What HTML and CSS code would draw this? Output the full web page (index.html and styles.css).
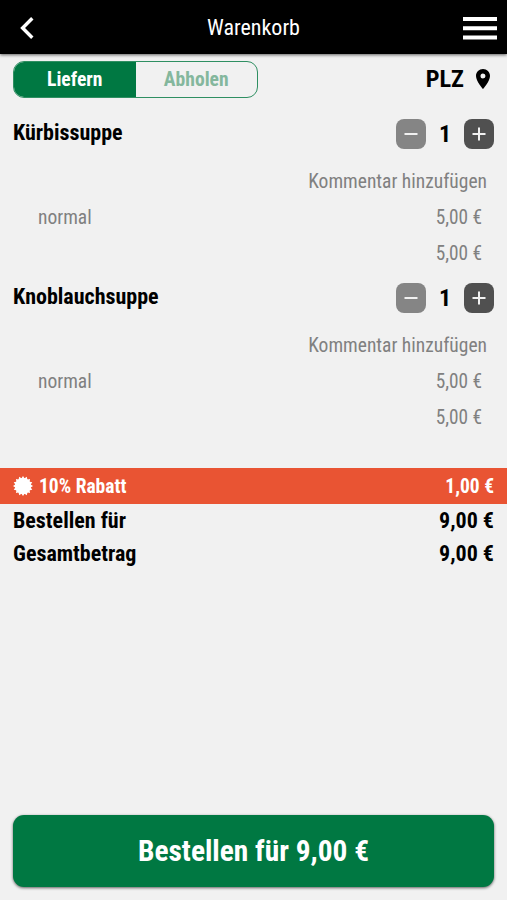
FILE: index.html
```html
<!DOCTYPE html>
<html lang="de">
<head>
<meta charset="utf-8">
<meta name="viewport" content="width=device-width, initial-scale=1">
<title>Warenkorb</title>
<link rel="stylesheet" href="styles.css">
</head>
<body>
<header class="topbar">
  <svg class="back" viewBox="0 0 14 22"><path d="M12.300 1.300L2.600 11l9.700 9.700" fill="none" stroke="#fff" stroke-width="3.400"/></svg>
  <h1 class="title"><span class="t">Warenkorb</span></h1>
  <svg class="menu" viewBox="0 0 34 24"><path d="M0 3h34M0 12.200h34M0 21.400h34" stroke="#fff" stroke-width="4"/></svg>
</header>
<main class="cart">
  <div class="mode-row">
    <div class="switch">
      <div class="option active"><span class="t">Liefern</span></div>
      <div class="option"><span class="t">Abholen</span></div>
    </div>
    <div class="plz"><span class="t">PLZ</span>
      <svg class="pin" viewBox="5 2 14 20"><path d="M12 2C8.130 2 5 5.130 5 9c0 5.250 7 13 7 13s7-7.750 7-13c0-3.870-3.130-7-7-7zm0 9.500a2.500 2.500 0 1 1 0-5 2.500 2.500 0 0 1 0 5z"/></svg>
    </div>
  </div>
  <section class="item">
    <div class="item-head">
      <h2 class="name"><span class="t">Kürbissuppe</span></h2>
      <div class="stepper">
        <button class="step minus" aria-label="Weniger"><svg viewBox="0 0 30 30"><path d="M8.500 15h13"/></svg></button>
        <span class="qty">1</span>
        <button class="step" aria-label="Mehr"><svg viewBox="0 0 30 30"><path d="M8.500 15h13M15 8.500v13"/></svg></button>
      </div>
    </div>
    <div class="comment"><span class="t">Kommentar hinzufügen</span></div>
    <div class="line"><span class="t">normal</span><span class="t price">5,00 €</span></div>
    <div class="line sum"><span class="t price">5,00 €</span></div>
  </section>
  <section class="item">
    <div class="item-head">
      <h2 class="name"><span class="t">Knoblauchsuppe</span></h2>
      <div class="stepper">
        <button class="step minus" aria-label="Weniger"><svg viewBox="0 0 30 30"><path d="M8.500 15h13"/></svg></button>
        <span class="qty">1</span>
        <button class="step" aria-label="Mehr"><svg viewBox="0 0 30 30"><path d="M8.500 15h13M15 8.500v13"/></svg></button>
      </div>
    </div>
    <div class="comment"><span class="t">Kommentar hinzufügen</span></div>
    <div class="line"><span class="t">normal</span><span class="t price">5,00 €</span></div>
    <div class="line sum"><span class="t price">5,00 €</span></div>
  </section>
  <div class="discount">
    <span class="label"><svg class="badge" viewBox="-10 -10 20 20"><circle r="8"/><path d="M-2 -7L0 -10L2 -7V7L0 10L-2 7z"/><path transform="rotate(22.500)" d="M-2 -7L0 -10L2 -7V7L0 10L-2 7z"/><path transform="rotate(45)" d="M-2 -7L0 -10L2 -7V7L0 10L-2 7z"/><path transform="rotate(67.500)" d="M-2 -7L0 -10L2 -7V7L0 10L-2 7z"/><path transform="rotate(90)" d="M-2 -7L0 -10L2 -7V7L0 10L-2 7z"/><path transform="rotate(112.500)" d="M-2 -7L0 -10L2 -7V7L0 10L-2 7z"/><path transform="rotate(135)" d="M-2 -7L0 -10L2 -7V7L0 10L-2 7z"/><path transform="rotate(157.500)" d="M-2 -7L0 -10L2 -7V7L0 10L-2 7z"/></svg><span class="t">10% Rabatt</span></span>
    <span class="t">1,00 €</span>
  </div>
  <div class="total"><span class="t">Bestellen für</span><span class="t">9,00 €</span></div>
  <div class="total"><span class="t">Gesamtbetrag</span><span class="t">9,00 €</span></div>
</main>
<footer class="footer"><button class="order"><span class="t">Bestellen für 9,00 €</span></button></footer>
</body>
</html>
```
FILE: styles.css
```css
* { box-sizing: border-box; }
body {
  margin: 0;
  height: 900px;
  display: flex;
  flex-direction: column;
  overflow: hidden;
  background: #f1f1f1;
  color: #000;
  font-family: "Roboto Condensed", Roboto, sans-serif;
  font-stretch: 75%;
}
h1, h2 { margin: 0; font-size: inherit; }
button { border: 0; padding: 0; font: inherit; color: inherit; }
svg { display: block; }
.t { white-space: nowrap; }
.topbar {
  height: 54px;
  padding: 2px 10px 0 20px;
  display: grid;
  grid-template-columns: 24px 1fr 34px;
  align-items: center;
  background: #000;
  color: #fff;
  box-shadow: 0 1px 3px rgba(0, 0, 0, .6);
}
.back { width: 14px; height: 22px; }
.title { text-align: center; font-size: 22px; font-weight: 400; padding-bottom: 1px; }
.menu { width: 34px; height: 24px; }
.cart { flex: 1; }
.mode-row {
  height: 50px;
  padding: 0 17px 0 13px;
  display: flex;
  align-items: center;
  justify-content: space-between;
}
.switch {
  width: 245px;
  height: 37px;
  display: flex;
  border: 1px solid #2f8f62;
  border-radius: 11px;
  overflow: hidden;
}
.option {
  flex: 1;
  display: flex;
  align-items: center;
  justify-content: center;
  font-size: 19.6px;
  font-weight: 700;
  color: #84b79d;
}
.option.active { background: #007842; color: #fff; }
.plz { display: flex; align-items: center; gap: 12px; font-size: 24.3px; font-weight: 700; padding-bottom: 1px; }
.pin { width: 14px; height: 20px; }
.item { height: 164px; padding: 11px 13px 0; color: #808080; font-size: 19.5px; }
.item-head { height: 38px; display: flex; justify-content: space-between; align-items: center; color: #000; }
.name { padding-bottom: 4px; font-size: 22px; font-weight: 700; }
.stepper { width: 98px; display: flex; align-items: center; justify-content: space-between; }
.step { width: 30px; height: 30px; border-radius: 8px; background: #505050; }
.step.minus { background: #858585; }
.step path { fill: none; stroke: #f1f1f1; stroke-width: 2; }
.qty { font-size: 24px; font-weight: 700; }
.comment { height: 34px; line-height: 34px; padding-right: 7px; margin-top: 12px; text-align: right; }
.line { height: 36px; padding: 0 12px 0 25px; display: flex; align-items: center; justify-content: space-between; }
.line.sum { justify-content: flex-end; }
.price { font-size: 19.3px; }
.discount {
  height: 36px;
  margin: 35.5px 0 .5px;
  padding: 1px 13px 0;
  display: flex;
  align-items: center;
  justify-content: space-between;
  background: #e95433;
  color: #fff;
  font-size: 19.5px;
  font-weight: 700;
}
.label { display: flex; align-items: center; gap: 6px; }
.badge { width: 20px; height: 20px; fill: #fff; }
.total { height: 33px; padding: 0 13px 1px; display: flex; align-items: center; justify-content: space-between; font-size: 22px; font-weight: 700; }
.footer { height: 86px; padding: 1px 13px 13px; }
.order {
  width: 100%;
  height: 72px;
  border-radius: 11px;
  background: #007842;
  color: #fff;
  font-size: 29.4px;
  font-weight: 700;
  box-shadow: 0 1px 3px rgba(0, 0, 0, .6);
}
```
